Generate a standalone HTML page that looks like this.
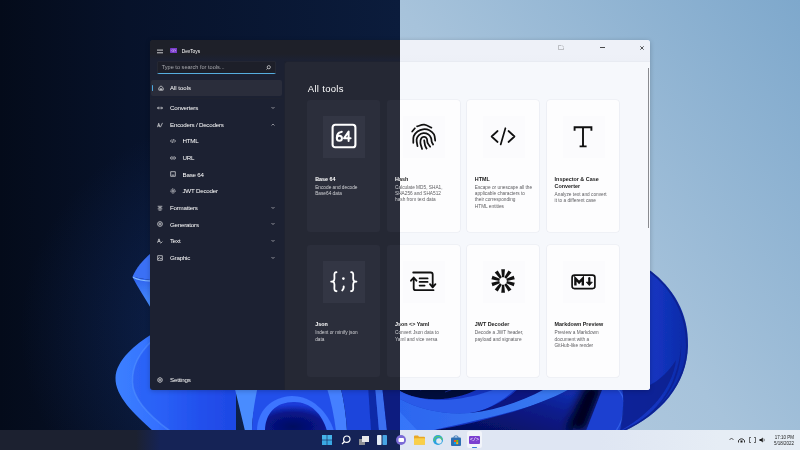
<!DOCTYPE html>
<html><head><meta charset="utf-8"><style>
html,body{margin:0;padding:0;width:800px;height:450px;overflow:hidden;background:#000}
.half{position:absolute;left:0;top:0;width:800px;height:450px;overflow:hidden;will-change:transform;filter:blur(0.3px)}
.win{position:absolute;left:150px;top:40px;width:500px;height:349.5px;border-radius:3px;overflow:hidden;box-shadow:0 1px 5px rgba(0,0,0,0.22)}
svg{display:block}
.t{position:absolute;white-space:nowrap;font-family:"Liberation Sans",sans-serif;line-height:1}
</style></head><body>
<div class="half" style="background:radial-gradient(ellipse 240px 220px at 260px 330px, rgba(25,65,150,0.4), rgba(25,65,150,0) 100%), linear-gradient(90deg,#040b1a 0%,#07122a 16%,#0b1c3c 50%,#0b1c3c 100%);clip-path:inset(0 400px 0 0);">
<svg style="position:absolute;left:0;top:0" width="800" height="450" viewBox="0 0 800 450">
<defs>
<filter id="bldark" x="-5%" y="-5%" width="110%" height="110%"><feGaussianBlur stdDeviation="0.6"/></filter><filter id="softdark" x="-50%" y="-20%" width="200%" height="140%"><feGaussianBlur stdDeviation="4"/></filter>
<linearGradient id="lfdark" x1="0" y1="0" x2="0" y2="1"><stop offset="0" stop-color="#2f63ee"/><stop offset="1" stop-color="#4a92ff"/></linearGradient>
<linearGradient id="lpdark" x1="0" y1="0" x2="1" y2="0"><stop offset="0" stop-color="#3c80ff"/><stop offset="0.35" stop-color="#3470ff"/><stop offset="0.7" stop-color="#1f4ae8"/><stop offset="1" stop-color="#1838d6"/></linearGradient>
<radialGradient id="navydark" cx="0.45" cy="0.85" r="0.75"><stop offset="0" stop-color="#030860"/><stop offset="0.65" stop-color="#08168a"/><stop offset="1" stop-color="#1a3ad8"/></radialGradient>
<linearGradient id="rpdark" x1="0" y1="0" x2="1" y2="0"><stop offset="0" stop-color="#1638c8"/><stop offset="0.6" stop-color="#1233bc"/><stop offset="1" stop-color="#0d2aa6"/></linearGradient>
<linearGradient id="drdark" x1="0" y1="0" x2="1" y2="1"><stop offset="0" stop-color="#1a44d6"/><stop offset="1" stop-color="#0a1c90"/></linearGradient>
<linearGradient id="bbdark" x1="0" y1="0" x2="1" y2="0"><stop offset="0" stop-color="#2c66f0"/><stop offset="1" stop-color="#3a7af0"/></linearGradient>
<linearGradient id="lowdarkdark" x1="0" y1="1" x2="1" y2="0"><stop offset="0" stop-color="#040a50"/><stop offset="0.6" stop-color="#0a1c8c"/><stop offset="1" stop-color="#1838c4"/></linearGradient>
</defs>
<g filter="url(#bldark)">
<!-- upper left petal -->
<path d="M150.5 253.5 C143 260 136 268 132.4 277 L150.5 280 Z" fill="#3a6ff5"/>
<path d="M132.4 277 C138 288 145 298 150.5 307.5 L150.5 280 Z" fill="url(#lfdark)"/>
<path d="M133 277.3 Q140 281 150.5 281" stroke="#86bcff" stroke-width="1.1" fill="none"/>
<!-- big lower-left petal + strip base -->
<path d="M152 334 C136 344 116 360 115.5 378 C115 396 134 414 153 431 L236 431 L236 385 L152 385 Z" fill="url(#lpdark)"/>
<path d="M152 341 C140 352 132 366 132.5 382 C133 400 152 418 170 431 L236 431 L236 385 L152 385 Z" fill="#2456f0" opacity="0.55"/>
<path d="M152 341 C140 352 132 366 132.5 382 C133 400 152 418 170 431" stroke="#5a9cff" stroke-width="1.6" fill="none" opacity="0.45"/>
<!-- light petal slanted at x~235 -->
<path d="M234 385 L262 385 C256 400 252 415 252 431 L245 431 Z" fill="#4a8cff"/>
<path d="M258 385 L340 385 L340 431 L252 431 C252 415 255 400 258 385 Z" fill="#2450ea"/>
<path d="M257 431 C257 412 270 397 292 396 C312 396 328 412 334 431 Z" fill="#3c74ff"/>
<path d="M265 431 C265 413 276 402 294 402 C311 402 322 414 327 431 Z" fill="url(#navydark)"/>
<!-- bands around 330-400 -->
<path d="M326 385 L340 385 C344 400 346 415 347 431 L336 431 C334 415 331 400 326 385 Z" fill="#4580ff"/>
<path d="M340 385 L400 385 L400 431 L347 431 C346 415 344 400 340 385 Z" fill="#1c44dc"/>
<path d="M368 385 L375 385 L379 431 L371 431 Z" fill="#0f2aa8"/>
<path d="M375 385 L382 385 L387 431 L379 431 Z" fill="#3a6ef0"/>
<path d="M382 385 L400 385 L400 431 L387 431 Z" fill="#081a80"/>
<!-- right side strip base -->
<path d="M400 385 L660 385 C650 405 640 420 620 431 L400 431 Z" fill="#1536c4"/>
<!-- top dark wedge -->
<path d="M400 385 L485 385 C470 395 450 400 430 399 C415 398 405 394 400 391 Z" fill="#04093a"/>
<path d="M420 390 L440 386 M445 392 L462 386" stroke="#1a3ab0" stroke-width="1" opacity="0.7"/>
<!-- band 1 -->
<path d="M400 391 C410 397 425 400 440 400 C465 400 490 392 505 385 L520 385 C505 400 485 412 470 413 C445 415 420 410 400 399 Z" fill="#2a5ae8"/>
<!-- dark between -->
<path d="M470 413 C490 410 510 398 522 385 L560 385 C545 400 520 410 480 418 Z" fill="#071280"/>
<!-- band 2 big -->
<path d="M400 399 C420 410 445 415 470 413 C500 410 530 398 552 385 L575 385 C560 396 540 404 510 412 C480 420 450 426 430 431 L400 431 Z" fill="url(#bbdark)"/>
<!-- lower dark region -->
<path d="M430 431 C460 426 495 418 525 408 C548 400 565 392 578 385 L590 385 C585 400 578 415 572 431 Z" fill="url(#lowdarkdark)"/>
<path d="M400 412 L418 431 L400 431 Z" fill="#3d80ff" opacity="0.6"/>
<!-- very dark diagonal -->
<path d="M585 385 L604 385 C598 400 592 415 586 431 L566 431 C572 415 578 400 585 385 Z" fill="#02061e" filter="url(#softdark)"/>
<path d="M604 385 L660 385 C650 405 640 420 620 431 L586 431 C592 415 598 400 604 385 Z" fill="#1a40d0"/>
<path d="M616 388 C622 392 625 400 624 410 C623 418 620 425 616 431" stroke="#3a6af0" stroke-width="1.4" fill="none" opacity="0.7"/>
<!-- right petal -->
<path d="M650 270.5 C672 287 689 312 688 346 C687 385 660 415 624 431 L621 431 C624 415 625 400 621 385 L650 385 Z" fill="url(#rpdark)"/>
<path d="M624 431 C650 418 668 398 676 372 C680 360 681 350 681 340 C684 380 662 414 624 431 Z" fill="#0a1c80" opacity="0.6"/>
<path d="M620 431 C622 418 625 400 622 388 L650 385 C660 380 670 370 676 360 C672 390 650 414 620 431 Z" fill="#0b1d88" opacity="0.75"/>
<path d="M650 271.5 C671.5 288 687.3 313 686.8 346 C686.3 384 659.5 414 623 431" stroke="#0a1f8a" stroke-width="1.6" fill="none" opacity="0.8"/>
</g>
</svg>
<div class="win" style="background:#1c2132;">
<div style="position:absolute;left:0;top:0;width:500px;height:20px;background:linear-gradient(#1e2029 70%,#1c2132)"></div>
<svg style="position:absolute;left:7px;top:8.7px" width="6" height="5" viewBox="0 0 6 5"><path d="M0 1.1H6M0 3.8H6" stroke="#ffffff" stroke-width="0.9" opacity="0.85"/></svg>
<svg style="position:absolute;left:19.8px;top:8px" width="7.4" height="5" viewBox="0 0 7.4 5"><rect width="7.4" height="5" rx="0.8" fill="#7a3ccc"/><path d="M2.6 1.6L1.6 2.5L2.6 3.4M4.8 1.6L5.8 2.5L4.8 3.4M4.1 1.2L3.3 3.8" stroke="#f0e6ff" stroke-width="0.5" fill="none"/></svg>
<div class="t" style="left:31.7px;top:10.2px;font-size:4.8px;color:#ffffff">DevToys</div>
<svg style="position:absolute;left:408px;top:5px" width="6" height="5" viewBox="0 0 6 5"><path d="M0.5 0.5H3.2M0.5 0.5V4.5H5.5V2.5M4 0.3L5.6 2" stroke="#ffffff" fill="none" stroke-width="0.5" opacity="0.45"/></svg>
<div style="position:absolute;left:450px;top:7px;width:4.8px;height:0.6px;background:#ffffff;opacity:0.75"></div>
<svg style="position:absolute;left:489.5px;top:5.6px" width="4" height="4" viewBox="0 0 4 4"><path d="M0.3 0.3L3.7 3.7M3.7 0.3L0.3 3.7" stroke="#ffffff" stroke-width="0.7"/></svg>
<div style="position:absolute;left:7px;top:20.5px;width:118.7px;height:13.8px;background:#1d1f29;border-radius:2px;overflow:hidden;box-shadow:inset 0 0 0 0.6px #2c2f3c"><div class="t" style="left:4.7px;top:4.6px;font-size:5.6px;color:#a8a9ae">Type to search for tools...</div><svg style="position:absolute;left:109px;top:4.5px" width="5" height="5" viewBox="0 0 5 5"><circle cx="2.8" cy="2.2" r="1.6" stroke="#ffffff" fill="none" stroke-width="0.6"/><path d="M1.7 3.3L0.5 4.5" stroke="#ffffff" stroke-width="0.6"/></svg><div style="position:absolute;left:0;bottom:0;width:120px;height:1.4px;background:#56aee0"></div></div>
<div style="position:absolute;left:1px;top:40px;width:131px;height:15.5px;background:#2a2d3b;border-radius:2px"></div>
<div style="position:absolute;left:2px;top:44.7px;width:1.3px;height:6px;background:#4ca7dc;border-radius:1px"></div>
<div style="position:absolute;left:7.5px;top:45px"><svg width="6" height="6" viewBox="0 0 7 7"><g stroke="#ffffff" fill="none" stroke-width="0.8" opacity="0.9"><path d="M1 3.2L3.5 1L6 3.2V6H1Z M2.8 6V4.3H4.2V6"/></g></svg></div>
<div class="t" style="left:20px;top:44.5px;font-size:6px;color:#ffffff">All tools</div>
<div style="position:absolute;left:0;top:58px;width:133px;height:0.6px;background:#1e2230"></div>
<div style="position:absolute;left:7.3px;top:64.8px"><svg width="6" height="6" viewBox="0 0 7 7"><g stroke="#ffffff" fill="none" stroke-width="0.8" opacity="0.9"><path d="M0.6 3.5H6.4 M2 2L0.6 3.5L2 5 M5 2L6.4 3.5L5 5"/></g></svg></div>
<div class="t" style="left:20px;top:64.89999999999999px;font-size:6.2px;letter-spacing:-0.22px;color:#ffffff">Converters</div>
<svg style="position:absolute;left:121px;top:65.8px" width="4" height="4" viewBox="0 0 4 4"><path d="M0.5 1L2 2.5L3.5 1" stroke="#ffffff" fill="none" stroke-width="0.5"/></svg>
<div style="position:absolute;left:7.3px;top:82.0px"><svg width="6" height="6" viewBox="0 0 7 7"><g stroke="#ffffff" fill="none" stroke-width="0.8" opacity="0.9"><path d="M0.6 6L2 1.5L3.4 6 M1.1 4.5H2.9 M4 6L6.4 1"/></g></svg></div>
<div class="t" style="left:20px;top:82.1px;font-size:6.2px;letter-spacing:-0.22px;color:#ffffff">Encoders / Decoders</div>
<svg style="position:absolute;left:121px;top:83.0px" width="4" height="4" viewBox="0 0 4 4"><path d="M0.5 2.5L2 1L3.5 2.5" stroke="#ffffff" fill="none" stroke-width="0.5"/></svg>
<div style="position:absolute;left:20px;top:98.19999999999999px"><svg width="6" height="6" viewBox="0 0 7 7"><g stroke="#ffffff" fill="none" stroke-width="0.8" opacity="0.9"><path d="M2 1.8L0.6 3.5L2 5.2 M5 1.8L6.4 3.5L5 5.2 M4 1.3L3 5.7"/></g></svg></div>
<div class="t" style="left:32.5px;top:98.29999999999998px;font-size:6.2px;letter-spacing:-0.22px;color:#ffffff">HTML</div>
<div style="position:absolute;left:20px;top:114.69999999999999px"><svg width="6" height="6" viewBox="0 0 7 7"><g stroke="#ffffff" fill="none" stroke-width="0.8" opacity="0.9"><path d="M3 2.2H1.8Q0.6 2.2 0.6 3.5Q0.6 4.8 1.8 4.8H3 M4 2.2H5.2Q6.4 2.2 6.4 3.5Q6.4 4.8 5.2 4.8H4 M2.2 3.5H4.8"/></g></svg></div>
<div class="t" style="left:32.5px;top:114.79999999999998px;font-size:6.2px;letter-spacing:-0.22px;color:#ffffff">URL</div>
<div style="position:absolute;left:20px;top:131.4px"><svg width="6" height="6" viewBox="0 0 7 7"><g stroke="#ffffff" fill="none" stroke-width="0.8" opacity="0.9"><path d="M0.8 0.8H6.2V6.2H0.8Z M2 4.8H5"/></g></svg></div>
<div class="t" style="left:32.5px;top:131.5px;font-size:6.2px;letter-spacing:-0.22px;color:#ffffff">Base 64</div>
<div style="position:absolute;left:20px;top:148.0px"><svg width="6" height="6" viewBox="0 0 7 7"><g stroke="#ffffff" fill="none" stroke-width="0.8" opacity="0.9"><circle cx="3.5" cy="3.5" r="1.3"/><circle cx="3.5" cy="3.5" r="2.6" stroke-dasharray="1.2 0.8"/></g></svg></div>
<div class="t" style="left:32.5px;top:148.1px;font-size:6.2px;letter-spacing:-0.22px;color:#ffffff">JWT Decoder</div>
<div style="position:absolute;left:7.3px;top:164.6px"><svg width="6" height="6" viewBox="0 0 7 7"><g stroke="#ffffff" fill="none" stroke-width="0.8" opacity="0.9"><path d="M0.8 1.5H6.2 M1.8 3H5.2 M0.8 4.5H6.2 M1.8 6H5.2"/></g></svg></div>
<div class="t" style="left:20px;top:164.7px;font-size:6.2px;letter-spacing:-0.22px;color:#ffffff">Formatters</div>
<svg style="position:absolute;left:121px;top:165.6px" width="4" height="4" viewBox="0 0 4 4"><path d="M0.5 1L2 2.5L3.5 1" stroke="#ffffff" fill="none" stroke-width="0.5"/></svg>
<div style="position:absolute;left:7.3px;top:181.4px"><svg width="6" height="6" viewBox="0 0 7 7"><g stroke="#ffffff" fill="none" stroke-width="0.8" opacity="0.9"><circle cx="3.5" cy="3.5" r="2.8"/><circle cx="3.5" cy="3.5" r="1.1"/></g></svg></div>
<div class="t" style="left:20px;top:181.5px;font-size:6.2px;letter-spacing:-0.22px;color:#ffffff">Generators</div>
<svg style="position:absolute;left:121px;top:182.4px" width="4" height="4" viewBox="0 0 4 4"><path d="M0.5 1L2 2.5L3.5 1" stroke="#ffffff" fill="none" stroke-width="0.5"/></svg>
<div style="position:absolute;left:7.3px;top:198.0px"><svg width="6" height="6" viewBox="0 0 7 7"><g stroke="#ffffff" fill="none" stroke-width="0.8" opacity="0.9"><path d="M0.6 5.5L2.3 1L4 5.5 M1.2 4H3.4 M4.2 6.3L6.3 4.2"/></g></svg></div>
<div class="t" style="left:20px;top:198.1px;font-size:6.2px;letter-spacing:-0.22px;color:#ffffff">Text</div>
<svg style="position:absolute;left:121px;top:199.0px" width="4" height="4" viewBox="0 0 4 4"><path d="M0.5 1L2 2.5L3.5 1" stroke="#ffffff" fill="none" stroke-width="0.5"/></svg>
<div style="position:absolute;left:7.3px;top:214.8px"><svg width="6" height="6" viewBox="0 0 7 7"><g stroke="#ffffff" fill="none" stroke-width="0.8" opacity="0.9"><path d="M0.8 0.8H6.2V6.2H0.8Z M0.8 5L2.8 3L4.5 4.7L5.3 4L6.2 4.9"/></g></svg></div>
<div class="t" style="left:20px;top:214.9px;font-size:6.2px;letter-spacing:-0.22px;color:#ffffff">Graphic</div>
<svg style="position:absolute;left:121px;top:215.8px" width="4" height="4" viewBox="0 0 4 4"><path d="M0.5 1L2 2.5L3.5 1" stroke="#ffffff" fill="none" stroke-width="0.5"/></svg>
<div style="position:absolute;left:7px;top:337.3px"><svg width="6" height="6" viewBox="0 0 7 7"><g stroke="#ffffff" fill="none" stroke-width="0.8" opacity="0.9"><circle cx="3.5" cy="3.5" r="1.2"/><path d="M3.5 0.6L6 2V5L3.5 6.4L1 5V2Z"/></g></svg></div>
<div class="t" style="left:20px;top:337.1px;font-size:6.2px;letter-spacing:-0.22px;color:#ffffff">Settings</div>
<div style="position:absolute;left:133.5px;top:20.5px;width:366.5px;height:329.5px;background:#252834;border-top-left-radius:3px;border-left:0.6px solid #1e2230;border-top:0.6px solid #1e2230">
<div class="t" style="left:23.3px;top:22.5px;font-size:9.5px;letter-spacing:0.3px;color:#ffffff">All tools</div>
<div style="position:absolute;left:363.5px;top:6px;width:0.8px;height:160px;background:#6d6e74"></div>
<div style="position:absolute;left:22.69999999999999px;top:38.4px;width:72.5px;height:132px;background:#2b2e3b;border-radius:3px;box-shadow:0 0 0 0.6px transparent">
<div style="position:absolute;left:16px;top:16px;width:42px;height:42px;background:#333644;border-radius:0;display:flex;align-items:center;justify-content:center"><svg width="26" height="26" viewBox="0 0 26 26" style="overflow:visible"><rect x="1.6" y="0.8" width="22.8" height="22.5" rx="2.6" stroke="#ffffff" fill="none" stroke-width="2.1" stroke-linecap="round" stroke-linejoin="round"/><circle cx="8.4" cy="14.3" r="2.55" stroke="#ffffff" fill="none" stroke-width="2" stroke-linecap="round" stroke-linejoin="round"/><path d="M10.80 7.80 C10.37 7.93 8.97 8.03 8.20 8.60 C7.43 9.17 6.58 10.27 6.20 11.20 C5.82 12.13 5.95 13.70 5.90 14.20" stroke="#ffffff" fill="none" stroke-width="2" stroke-linecap="round" stroke-linejoin="round"/><path d="M17.6 17.1V7.6L13 14.2H19.6" stroke="#ffffff" fill="none" stroke-width="2" stroke-linecap="round" stroke-linejoin="round"/></svg></div>
<div class="t" style="left:8px;top:76.7px;font-size:5.4px;font-weight:bold;color:#ffffff">Base 64</div>
<div class="t" style="left:8px;top:86.0px;font-size:4.75px;color:#cfd0d4">Encode and decode</div>
<div class="t" style="left:8px;top:92.25px;font-size:4.75px;color:#cfd0d4">Base64 data</div>
</div>
<div style="position:absolute;left:102.5px;top:38.4px;width:72.5px;height:132px;background:#2b2e3b;border-radius:3px;box-shadow:0 0 0 0.6px transparent">
<div style="position:absolute;left:16px;top:16px;width:42px;height:42px;background:#333644;border-radius:0;display:flex;align-items:center;justify-content:center"><svg width="26" height="26" viewBox="0 0 26 26" style="overflow:visible"><path d="M6.10 2.40 C7.28 2.12 10.82 0.50 13.20 0.70 C15.58 0.90 19.20 3.12 20.40 3.60" stroke="#ffffff" fill="none" stroke-width="1.75" stroke-linecap="round" stroke-linejoin="round"/><path d="M1.20 7.50 L3.90 4.30" stroke="#ffffff" fill="none" stroke-width="1.75" stroke-linecap="round" stroke-linejoin="round"/><path d="M2.30 18.90 C2.37 17.77 2.00 14.00 2.70 12.10 C3.40 10.20 4.95 8.63 6.50 7.50 C8.05 6.37 10.03 5.52 12.00 5.30 C13.97 5.08 16.47 5.35 18.30 6.20 C20.13 7.05 22.02 8.65 23.00 10.40 C23.98 12.15 24.00 15.65 24.20 16.70" stroke="#ffffff" fill="none" stroke-width="1.75" stroke-linecap="round" stroke-linejoin="round"/><path d="M6.50 22.20 C6.35 21.08 5.40 17.32 5.60 15.50 C5.80 13.68 6.57 12.37 7.70 11.30 C8.83 10.23 10.77 9.25 12.40 9.10 C14.03 8.95 16.23 9.62 17.50 10.40 C18.77 11.18 19.45 12.53 20.00 13.80 C20.55 15.07 20.45 16.88 20.80 18.00 C21.15 19.12 21.88 20.08 22.10 20.50" stroke="#ffffff" fill="none" stroke-width="1.75" stroke-linecap="round" stroke-linejoin="round"/><path d="M11.10 24.90 C10.82 23.90 9.53 20.68 9.40 18.90 C9.27 17.12 9.67 15.20 10.30 14.20 C10.93 13.20 12.28 12.83 13.20 12.90 C14.12 12.97 15.23 13.60 15.80 14.60 C16.37 15.60 16.03 17.55 16.60 18.90 C17.17 20.25 18.77 22.07 19.20 22.70" stroke="#ffffff" fill="none" stroke-width="1.75" stroke-linecap="round" stroke-linejoin="round"/><path d="M13.20 16.30 C13.35 17.15 13.70 20.03 14.10 21.40 C14.50 22.77 15.35 23.98 15.60 24.50" stroke="#ffffff" fill="none" stroke-width="1.75" stroke-linecap="round" stroke-linejoin="round"/></svg></div>
<div class="t" style="left:8px;top:76.7px;font-size:5.4px;font-weight:bold;color:#ffffff">Hash</div>
<div class="t" style="left:8px;top:86.0px;font-size:4.75px;color:#cfd0d4">Calculate MD5, SHA1,</div>
<div class="t" style="left:8px;top:92.25px;font-size:4.75px;color:#cfd0d4">SHA256 and SHA512</div>
<div class="t" style="left:8px;top:98.5px;font-size:4.75px;color:#cfd0d4">hash from text data</div>
</div>
<div style="position:absolute;left:182.29999999999995px;top:38.4px;width:72.5px;height:132px;background:#2b2e3b;border-radius:3px;box-shadow:0 0 0 0.6px transparent">
<div style="position:absolute;left:16px;top:16px;width:42px;height:42px;background:#333644;border-radius:0;display:flex;align-items:center;justify-content:center"><svg width="26" height="26" viewBox="0 0 26 26" style="overflow:visible"><path d="M6.6 7L0.6 12.5L6.6 18M17.5 7L23.5 12.5L17.5 18M14.4 4.2L9.7 20.4" stroke="#ffffff" fill="none" stroke-width="1.7" stroke-linecap="round" stroke-linejoin="round"/></svg></div>
<div class="t" style="left:8px;top:76.7px;font-size:5.4px;font-weight:bold;color:#ffffff">HTML</div>
<div class="t" style="left:8px;top:86.0px;font-size:4.75px;color:#cfd0d4">Escape or unescape all the</div>
<div class="t" style="left:8px;top:92.25px;font-size:4.75px;color:#cfd0d4">applicable characters to</div>
<div class="t" style="left:8px;top:98.5px;font-size:4.75px;color:#cfd0d4">their corresponding</div>
<div class="t" style="left:8px;top:104.75px;font-size:4.75px;color:#cfd0d4">HTML entities</div>
</div>
<div style="position:absolute;left:262.1px;top:38.4px;width:72.5px;height:132px;background:#2b2e3b;border-radius:3px;box-shadow:0 0 0 0.6px transparent">
<div style="position:absolute;left:16px;top:16px;width:42px;height:42px;background:#333644;border-radius:0;display:flex;align-items:center;justify-content:center"><svg width="26" height="26" viewBox="0 0 26 26" style="overflow:visible"><path d="M3.6 6.8V3.3H20.4V6.8M12 3.3V22.4M8.6 22.4H15.6" stroke="#ffffff" fill="none" stroke-width="1.9"/></svg></div>
<div class="t" style="left:8px;top:76.7px;font-size:5.4px;font-weight:bold;color:#ffffff">Inspector &amp; Case</div>
<div class="t" style="left:8px;top:83.9px;font-size:5.4px;font-weight:bold;color:#ffffff">Converter</div>
<div class="t" style="left:8px;top:93.2px;font-size:4.75px;color:#cfd0d4">Analyze text and convert</div>
<div class="t" style="left:8px;top:99.45px;font-size:4.75px;color:#cfd0d4">it to a different case</div>
</div>
<div style="position:absolute;left:22.69999999999999px;top:183.9px;width:72.5px;height:132px;background:#2b2e3b;border-radius:3px;box-shadow:0 0 0 0.6px transparent">
<div style="position:absolute;left:16px;top:16px;width:42px;height:42px;background:#333644;border-radius:0;display:flex;align-items:center;justify-content:center"><svg width="26" height="26" viewBox="0 0 26 26" style="overflow:visible"><g transform="translate(0 0.8)"><path d="M5.50 2.40 C5.25 2.47 4.35 2.43 4.00 2.80 C3.65 3.17 3.50 3.57 3.40 4.60 C3.30 5.63 3.53 7.90 3.40 9.00 C3.27 10.10 3.13 10.73 2.60 11.20 C2.07 11.67 0.60 11.70 0.20 11.80 M0.20 11.80 C0.60 11.90 2.07 11.93 2.60 12.40 C3.13 12.87 3.27 13.50 3.40 14.60 C3.53 15.70 3.30 17.97 3.40 19.00 C3.50 20.03 3.65 20.40 4.00 20.80 C4.35 21.20 5.25 21.30 5.50 21.40" stroke="#ffffff" fill="none" stroke-width="1.8" stroke-linecap="round" stroke-linejoin="round"/><path transform="translate(0.9 0)" d="M19.20 2.40 C19.45 2.47 20.35 2.43 20.70 2.80 C21.05 3.17 21.20 3.57 21.30 4.60 C21.40 5.63 21.17 7.90 21.30 9.00 C21.43 10.10 21.57 10.73 22.10 11.20 C22.63 11.67 24.10 11.70 24.50 11.80 M24.50 11.80 C24.10 11.90 22.63 11.93 22.10 12.40 C21.57 12.87 21.43 13.50 21.30 14.60 C21.17 15.70 21.40 17.97 21.30 19.00 C21.20 20.03 21.05 20.40 20.70 20.80 C20.35 21.20 19.45 21.30 19.20 21.40" stroke="#ffffff" fill="none" stroke-width="1.8" stroke-linecap="round" stroke-linejoin="round"/><circle cx="12.4" cy="8.8" r="1.3" fill="#ffffff"/><path d="M12.7 16.6 Q12.9 19 11.3 20.6" stroke="#ffffff" fill="none" stroke-width="1.9" stroke-linecap="round" stroke-linejoin="round"/></g></svg></div>
<div class="t" style="left:8px;top:76.7px;font-size:5.4px;font-weight:bold;color:#ffffff">Json</div>
<div class="t" style="left:8px;top:86.0px;font-size:4.75px;color:#cfd0d4">Indent or minify json</div>
<div class="t" style="left:8px;top:92.25px;font-size:4.75px;color:#cfd0d4">data</div>
</div>
<div style="position:absolute;left:102.5px;top:183.9px;width:72.5px;height:132px;background:#2b2e3b;border-radius:3px;box-shadow:0 0 0 0.6px transparent">
<div style="position:absolute;left:16px;top:16px;width:42px;height:42px;background:#333644;border-radius:0;display:flex;align-items:center;justify-content:center"><svg width="26" height="26" viewBox="0 0 26 26" style="overflow:visible"><path transform="translate(0 1.2)" d="M2.2 2.3H19.7Q21.7 2.3 21.7 4.3V16.6M19 13.9L21.7 17.1L24.4 13.9M2.7 7.6V18Q2.7 20 4.7 20H22.5M0 10.5L2.7 7.3L5.4 10.5M8.6 8.2H16.6M8.6 11.7H16.6M8.6 15.4H13.6" stroke="#ffffff" fill="none" stroke-width="1.8" stroke-linecap="round" stroke-linejoin="round"/></svg></div>
<div class="t" style="left:8px;top:76.7px;font-size:5.4px;font-weight:bold;color:#ffffff">Json &lt;&gt; Yaml</div>
<div class="t" style="left:8px;top:86.0px;font-size:4.75px;color:#cfd0d4">Convert Json data to</div>
<div class="t" style="left:8px;top:92.25px;font-size:4.75px;color:#cfd0d4">Yaml and vice versa</div>
</div>
<div style="position:absolute;left:182.29999999999995px;top:183.9px;width:72.5px;height:132px;background:#2b2e3b;border-radius:3px;box-shadow:0 0 0 0.6px transparent">
<div style="position:absolute;left:16px;top:16px;width:42px;height:42px;background:#333644;border-radius:0;display:flex;align-items:center;justify-content:center"><svg width="26" height="26" viewBox="0 0 26 26" style="overflow:visible"><path d="M13.20 8.30 L13.95 0.30 L10.25 0.30 L11.00 8.30Z" fill="#ffffff"/><path d="M15.16 9.65 L20.47 3.62 L17.48 1.45 L13.38 8.36Z" fill="#ffffff"/><path d="M15.96 11.90 L23.80 10.14 L22.66 6.63 L15.28 9.81Z" fill="#ffffff"/><path d="M15.28 14.19 L22.66 17.37 L23.80 13.86 L15.96 12.10Z" fill="#ffffff"/><path d="M13.38 15.64 L17.48 22.55 L20.47 20.38 L15.16 14.35Z" fill="#ffffff"/><path d="M11.00 15.70 L10.25 23.70 L13.95 23.70 L13.20 15.70Z" fill="#ffffff"/><path d="M9.04 14.35 L3.73 20.38 L6.72 22.55 L10.82 15.64Z" fill="#ffffff"/><path d="M8.24 12.10 L0.40 13.86 L1.54 17.37 L8.92 14.19Z" fill="#ffffff"/><path d="M8.92 9.81 L1.54 6.63 L0.40 10.14 L8.24 11.90Z" fill="#ffffff"/><path d="M10.82 8.36 L6.72 1.45 L3.73 3.62 L9.04 9.65Z" fill="#ffffff"/></svg></div>
<div class="t" style="left:8px;top:76.7px;font-size:5.4px;font-weight:bold;color:#ffffff">JWT Decoder</div>
<div class="t" style="left:8px;top:86.0px;font-size:4.75px;color:#cfd0d4">Decode a JWT header,</div>
<div class="t" style="left:8px;top:92.25px;font-size:4.75px;color:#cfd0d4">payload and signature</div>
</div>
<div style="position:absolute;left:262.1px;top:183.9px;width:72.5px;height:132px;background:#2b2e3b;border-radius:3px;box-shadow:0 0 0 0.6px transparent">
<div style="position:absolute;left:16px;top:16px;width:42px;height:42px;background:#333644;border-radius:0;display:flex;align-items:center;justify-content:center"><svg width="26" height="26" viewBox="0 0 26 26" style="overflow:visible"><rect x="1.1" y="6.1" width="22.8" height="13.5" rx="2.4" stroke="#ffffff" fill="none" stroke-width="1.7" stroke-linecap="round" stroke-linejoin="round"/><path d="M4.4 16.4V9.5L8.1 13.4L11.8 9.5V16.4" stroke="#ffffff" fill="none" stroke-width="2.4" stroke-linejoin="miter"/><path d="M18.3 9.2V14.5" stroke="#ffffff" fill="none" stroke-width="2.2" stroke-linecap="round" stroke-linejoin="round"/><path d="M15.3 13.2H21.3L18.3 16.6Z" fill="#ffffff" stroke="#ffffff" stroke-width="0.8" stroke-linejoin="round"/></svg></div>
<div class="t" style="left:8px;top:76.7px;font-size:5.4px;font-weight:bold;color:#ffffff">Markdown Preview</div>
<div class="t" style="left:8px;top:86.0px;font-size:4.75px;color:#cfd0d4">Preview a Markdown</div>
<div class="t" style="left:8px;top:92.25px;font-size:4.75px;color:#cfd0d4">document with a</div>
<div class="t" style="left:8px;top:98.5px;font-size:4.75px;color:#cfd0d4">GitHub-like render</div>
</div>
</div>
</div>
<div style="position:absolute;left:0;top:429.5px;width:800px;height:20.5px;background:linear-gradient(90deg,#1c2130 0%,#1c2130 17%,#152356 20%,#152356 50%)">
<svg style="position:absolute;left:321.5px;top:5.5px" width="10" height="10" viewBox="0 0 10 10"><rect x="0" y="0" width="4.7" height="4.7" fill="#46b4ea"/><rect x="5.3" y="0" width="4.7" height="4.7" fill="#46b4ea"/><rect x="0" y="5.3" width="4.7" height="4.7" fill="#3aa8e4"/><rect x="5.3" y="5.3" width="4.7" height="4.7" fill="#3aa8e4"/></svg>
<svg style="position:absolute;left:340.5px;top:5.5px" width="10" height="10" viewBox="0 0 10 10"><circle cx="5.8" cy="4.2" r="3.2" stroke="#ffffff" fill="none" stroke-width="1.2"/><path d="M3.5 6.5L1 9" stroke="#ffffff" stroke-width="1.3"/></svg>
<svg style="position:absolute;left:359px;top:6px" width="10" height="9" viewBox="0 0 10 9"><rect x="0" y="3" width="6" height="6" fill="#8d8f94"/><rect x="3" y="0" width="7" height="6" fill="#e8e8ea"/></svg>
<svg style="position:absolute;left:377px;top:5.5px" width="10" height="10" viewBox="0 0 10 10"><rect x="0" y="0" width="4.5" height="10" rx="0.8" fill="#e6eef6"/><rect x="5.5" y="0" width="4.5" height="10" rx="0.8" fill="#47a5e4"/></svg>
<svg style="position:absolute;left:395.5px;top:5.5px" width="10" height="10" viewBox="0 0 10 10"><circle cx="5" cy="5" r="5" fill="#7b6bd6"/><rect x="2.5" y="3" width="5.5" height="4" rx="1" fill="#fff"/></svg>
<svg style="position:absolute;left:414px;top:5.5px" width="11" height="10" viewBox="0 0 11 10"><path d="M0 1.5Q0 0.5 1 0.5H4L5 1.8H10Q11 1.8 11 2.8V9.5H0Z" fill="#e8a726"/><rect x="0" y="3.2" width="11" height="6.6" rx="0.8" fill="#f9cf4a"/></svg>
<svg style="position:absolute;left:432.5px;top:5.5px" width="10" height="10" viewBox="0 0 10 10"><circle cx="5" cy="5" r="5" fill="#2aa0e0"/><circle cx="6" cy="6" r="2.8" fill="#e2e9f1"/><path d="M1 6 Q2 1 6 1.5 Q9 2.5 9 5" fill="none" stroke="#58c86a" stroke-width="1.2"/></svg>
<svg style="position:absolute;left:450.5px;top:5px" width="10" height="11" viewBox="0 0 10 11"><rect x="0" y="2.5" width="10" height="8.5" rx="1" fill="#2d6fb3"/><path d="M3 3V1.5Q5 0 7 1.5V3" stroke="#2d6fb3" fill="none" stroke-width="0.8"/><rect x="3" y="5" width="2" height="2" fill="#f35325"/><rect x="5.2" y="5" width="2" height="2" fill="#81bc06"/><rect x="3" y="7.2" width="2" height="2" fill="#05a6f0"/><rect x="5.2" y="7.2" width="2" height="2" fill="#ffba08"/></svg>
<div style="position:absolute;left:466.5px;top:1.5px;width:15.5px;height:17px;background:rgba(255,255,255,0.55);border-radius:2px"></div>
<div style="position:absolute;left:469px;top:6px;width:11px;height:8px;background:#7b3fd0;border-radius:1px;color:#fff;font-size:5px;line-height:8px;text-align:center;font-family:Liberation Mono">&lt;/&gt;</div>
<div style="position:absolute;left:471.5px;top:17.2px;width:5px;height:1.2px;background:#3a7bd5;border-radius:1px"></div>
<svg style="position:absolute;left:729px;top:7px" width="5" height="4" viewBox="0 0 5 4"><path d="M0.5 3L2.5 1L4.5 3" stroke="#ffffff" fill="none" stroke-width="0.7"/></svg>
<svg style="position:absolute;left:738px;top:7px" width="7" height="6" viewBox="0 0 7 6"><path d="M0.5 5.5V3.5Q3.5 0 6.5 3.5V5.5" stroke="#ffffff" fill="none" stroke-width="0.9"/><rect x="2.5" y="3.5" width="2" height="2" fill="#ffffff"/></svg>
<svg style="position:absolute;left:749px;top:7px" width="7" height="6" viewBox="0 0 7 6"><path d="M2 0.4H0.4V5.6H2M5 0.4H6.6V5.6H5" stroke="#ffffff" fill="none" stroke-width="0.7"/></svg>
<svg style="position:absolute;left:759px;top:7.5px" width="7" height="6" viewBox="0 0 7 6"><path d="M0.5 2H2L3.8 0.5V5.5L2 4H0.5Z" fill="#ffffff"/><path d="M4.8 1.6Q5.8 3 4.8 4.4" stroke="#ffffff" fill="none" stroke-width="0.6"/></svg>
<div class="t" style="left:773px;top:6px;font-size:4.5px;color:#ffffff;text-align:right;width:21px">17:10 PM</div>
<div class="t" style="left:771px;top:12.8px;font-size:4.5px;color:#ffffff;text-align:right;width:23px">5/18/2022</div>
</div>
</div>
<div class="half" style="background:linear-gradient(232deg,#7ea8cc 0%,#a7c3db 35%,#cfdce8 100%);clip-path:inset(0 0 0 400px);">
<svg style="position:absolute;left:0;top:0" width="800" height="450" viewBox="0 0 800 450">
<defs>
<filter id="bllight" x="-5%" y="-5%" width="110%" height="110%"><feGaussianBlur stdDeviation="0.6"/></filter><filter id="softlight" x="-50%" y="-20%" width="200%" height="140%"><feGaussianBlur stdDeviation="4"/></filter>
<linearGradient id="lflight" x1="0" y1="0" x2="0" y2="1"><stop offset="0" stop-color="#2f63ee"/><stop offset="1" stop-color="#4a92ff"/></linearGradient>
<linearGradient id="lplight" x1="0" y1="0" x2="1" y2="0"><stop offset="0" stop-color="#3c80ff"/><stop offset="0.35" stop-color="#3470ff"/><stop offset="0.7" stop-color="#1f4ae8"/><stop offset="1" stop-color="#1838d6"/></linearGradient>
<radialGradient id="navylight" cx="0.45" cy="0.85" r="0.75"><stop offset="0" stop-color="#030860"/><stop offset="0.65" stop-color="#08168a"/><stop offset="1" stop-color="#1a3ad8"/></radialGradient>
<linearGradient id="rplight" x1="0" y1="0" x2="1" y2="0"><stop offset="0" stop-color="#1638c8"/><stop offset="0.6" stop-color="#1233bc"/><stop offset="1" stop-color="#0d2aa6"/></linearGradient>
<linearGradient id="drlight" x1="0" y1="0" x2="1" y2="1"><stop offset="0" stop-color="#1a44d6"/><stop offset="1" stop-color="#0a1c90"/></linearGradient>
<linearGradient id="bblight" x1="0" y1="0" x2="1" y2="0"><stop offset="0" stop-color="#2c66f0"/><stop offset="1" stop-color="#3a7af0"/></linearGradient>
<linearGradient id="lowdarklight" x1="0" y1="1" x2="1" y2="0"><stop offset="0" stop-color="#040a50"/><stop offset="0.6" stop-color="#0a1c8c"/><stop offset="1" stop-color="#1838c4"/></linearGradient>
</defs>
<g filter="url(#bllight)">
<!-- upper left petal -->
<path d="M150.5 253.5 C143 260 136 268 132.4 277 L150.5 280 Z" fill="#3a6ff5"/>
<path d="M132.4 277 C138 288 145 298 150.5 307.5 L150.5 280 Z" fill="url(#lflight)"/>
<path d="M133 277.3 Q140 281 150.5 281" stroke="#86bcff" stroke-width="1.1" fill="none"/>
<!-- big lower-left petal + strip base -->
<path d="M152 334 C136 344 116 360 115.5 378 C115 396 134 414 153 431 L236 431 L236 385 L152 385 Z" fill="url(#lplight)"/>
<path d="M152 341 C140 352 132 366 132.5 382 C133 400 152 418 170 431 L236 431 L236 385 L152 385 Z" fill="#2456f0" opacity="0.55"/>
<path d="M152 341 C140 352 132 366 132.5 382 C133 400 152 418 170 431" stroke="#5a9cff" stroke-width="1.6" fill="none" opacity="0.45"/>
<!-- light petal slanted at x~235 -->
<path d="M234 385 L262 385 C256 400 252 415 252 431 L245 431 Z" fill="#4a8cff"/>
<path d="M258 385 L340 385 L340 431 L252 431 C252 415 255 400 258 385 Z" fill="#2450ea"/>
<path d="M257 431 C257 412 270 397 292 396 C312 396 328 412 334 431 Z" fill="#3c74ff"/>
<path d="M265 431 C265 413 276 402 294 402 C311 402 322 414 327 431 Z" fill="url(#navylight)"/>
<!-- bands around 330-400 -->
<path d="M326 385 L340 385 C344 400 346 415 347 431 L336 431 C334 415 331 400 326 385 Z" fill="#4580ff"/>
<path d="M340 385 L400 385 L400 431 L347 431 C346 415 344 400 340 385 Z" fill="#1c44dc"/>
<path d="M368 385 L375 385 L379 431 L371 431 Z" fill="#0f2aa8"/>
<path d="M375 385 L382 385 L387 431 L379 431 Z" fill="#3a6ef0"/>
<path d="M382 385 L400 385 L400 431 L387 431 Z" fill="#081a80"/>
<!-- right side strip base -->
<path d="M400 385 L660 385 C650 405 640 420 620 431 L400 431 Z" fill="#1536c4"/>
<!-- top dark wedge -->
<path d="M400 385 L485 385 C470 395 450 400 430 399 C415 398 405 394 400 391 Z" fill="#04093a"/>
<path d="M420 390 L440 386 M445 392 L462 386" stroke="#1a3ab0" stroke-width="1" opacity="0.7"/>
<!-- band 1 -->
<path d="M400 391 C410 397 425 400 440 400 C465 400 490 392 505 385 L520 385 C505 400 485 412 470 413 C445 415 420 410 400 399 Z" fill="#2a5ae8"/>
<!-- dark between -->
<path d="M470 413 C490 410 510 398 522 385 L560 385 C545 400 520 410 480 418 Z" fill="#071280"/>
<!-- band 2 big -->
<path d="M400 399 C420 410 445 415 470 413 C500 410 530 398 552 385 L575 385 C560 396 540 404 510 412 C480 420 450 426 430 431 L400 431 Z" fill="url(#bblight)"/>
<!-- lower dark region -->
<path d="M430 431 C460 426 495 418 525 408 C548 400 565 392 578 385 L590 385 C585 400 578 415 572 431 Z" fill="url(#lowdarklight)"/>
<path d="M400 412 L418 431 L400 431 Z" fill="#3d80ff" opacity="0.6"/>
<!-- very dark diagonal -->
<path d="M585 385 L604 385 C598 400 592 415 586 431 L566 431 C572 415 578 400 585 385 Z" fill="#02061e" filter="url(#softlight)"/>
<path d="M604 385 L660 385 C650 405 640 420 620 431 L586 431 C592 415 598 400 604 385 Z" fill="#1a40d0"/>
<path d="M616 388 C622 392 625 400 624 410 C623 418 620 425 616 431" stroke="#3a6af0" stroke-width="1.4" fill="none" opacity="0.7"/>
<!-- right petal -->
<path d="M650 270.5 C672 287 689 312 688 346 C687 385 660 415 624 431 L621 431 C624 415 625 400 621 385 L650 385 Z" fill="url(#rplight)"/>
<path d="M624 431 C650 418 668 398 676 372 C680 360 681 350 681 340 C684 380 662 414 624 431 Z" fill="#0a1c80" opacity="0.6"/>
<path d="M620 431 C622 418 625 400 622 388 L650 385 C660 380 670 370 676 360 C672 390 650 414 620 431 Z" fill="#0b1d88" opacity="0.75"/>
<path d="M650 271.5 C671.5 288 687.3 313 686.8 346 C686.3 384 659.5 414 623 431" stroke="#0a1f8a" stroke-width="1.6" fill="none" opacity="0.8"/>
</g>
</svg>
<div class="win" style="background:#edf0f7;">
<div style="position:absolute;left:0;top:0;width:500px;height:20px;background:linear-gradient(#eef1f8 70%,#edf0f7)"></div>
<svg style="position:absolute;left:7px;top:8.7px" width="6" height="5" viewBox="0 0 6 5"><path d="M0 1.1H6M0 3.8H6" stroke="#111111" stroke-width="0.9" opacity="0.85"/></svg>
<svg style="position:absolute;left:19.8px;top:8px" width="7.4" height="5" viewBox="0 0 7.4 5"><rect width="7.4" height="5" rx="0.8" fill="#7a3ccc"/><path d="M2.6 1.6L1.6 2.5L2.6 3.4M4.8 1.6L5.8 2.5L4.8 3.4M4.1 1.2L3.3 3.8" stroke="#f0e6ff" stroke-width="0.5" fill="none"/></svg>
<div class="t" style="left:31.7px;top:10.2px;font-size:4.8px;color:#1b1b1b">DevToys</div>
<svg style="position:absolute;left:408px;top:5px" width="6" height="5" viewBox="0 0 6 5"><path d="M0.5 0.5H3.2M0.5 0.5V4.5H5.5V2.5M4 0.3L5.6 2" stroke="#111111" fill="none" stroke-width="0.5" opacity="0.45"/></svg>
<div style="position:absolute;left:450px;top:7px;width:4.8px;height:0.6px;background:#111111;opacity:0.75"></div>
<svg style="position:absolute;left:489.5px;top:5.6px" width="4" height="4" viewBox="0 0 4 4"><path d="M0.3 0.3L3.7 3.7M3.7 0.3L0.3 3.7" stroke="#111111" stroke-width="0.7"/></svg>
<div style="position:absolute;left:7px;top:20.5px;width:118.7px;height:13.8px;background:#fafbfd;border-radius:2px;overflow:hidden;box-shadow:inset 0 0 0 0.6px #dfe2ea"><div class="t" style="left:4.7px;top:4.6px;font-size:5.6px;color:#6b6b70">Type to search for tools...</div><svg style="position:absolute;left:109px;top:4.5px" width="5" height="5" viewBox="0 0 5 5"><circle cx="2.8" cy="2.2" r="1.6" stroke="#111111" fill="none" stroke-width="0.6"/><path d="M1.7 3.3L0.5 4.5" stroke="#111111" stroke-width="0.6"/></svg><div style="position:absolute;left:0;bottom:0;width:120px;height:1.4px;background:#56aee0"></div></div>
<div style="position:absolute;left:1px;top:40px;width:131px;height:15.5px;background:#e3e6ee;border-radius:2px"></div>
<div style="position:absolute;left:2px;top:44.7px;width:1.3px;height:6px;background:#4ca7dc;border-radius:1px"></div>
<div style="position:absolute;left:7.5px;top:45px"><svg width="6" height="6" viewBox="0 0 7 7"><g stroke="#111111" fill="none" stroke-width="0.8" opacity="0.9"><path d="M1 3.2L3.5 1L6 3.2V6H1Z M2.8 6V4.3H4.2V6"/></g></svg></div>
<div class="t" style="left:20px;top:44.5px;font-size:6px;color:#1b1b1b">All tools</div>
<div style="position:absolute;left:0;top:58px;width:133px;height:0.6px;background:#e8ebf2"></div>
<div style="position:absolute;left:7.3px;top:64.8px"><svg width="6" height="6" viewBox="0 0 7 7"><g stroke="#111111" fill="none" stroke-width="0.8" opacity="0.9"><path d="M0.6 3.5H6.4 M2 2L0.6 3.5L2 5 M5 2L6.4 3.5L5 5"/></g></svg></div>
<div class="t" style="left:20px;top:64.89999999999999px;font-size:6.2px;letter-spacing:-0.22px;color:#1b1b1b">Converters</div>
<svg style="position:absolute;left:121px;top:65.8px" width="4" height="4" viewBox="0 0 4 4"><path d="M0.5 1L2 2.5L3.5 1" stroke="#111111" fill="none" stroke-width="0.5"/></svg>
<div style="position:absolute;left:7.3px;top:82.0px"><svg width="6" height="6" viewBox="0 0 7 7"><g stroke="#111111" fill="none" stroke-width="0.8" opacity="0.9"><path d="M0.6 6L2 1.5L3.4 6 M1.1 4.5H2.9 M4 6L6.4 1"/></g></svg></div>
<div class="t" style="left:20px;top:82.1px;font-size:6.2px;letter-spacing:-0.22px;color:#1b1b1b">Encoders / Decoders</div>
<svg style="position:absolute;left:121px;top:83.0px" width="4" height="4" viewBox="0 0 4 4"><path d="M0.5 2.5L2 1L3.5 2.5" stroke="#111111" fill="none" stroke-width="0.5"/></svg>
<div style="position:absolute;left:20px;top:98.19999999999999px"><svg width="6" height="6" viewBox="0 0 7 7"><g stroke="#111111" fill="none" stroke-width="0.8" opacity="0.9"><path d="M2 1.8L0.6 3.5L2 5.2 M5 1.8L6.4 3.5L5 5.2 M4 1.3L3 5.7"/></g></svg></div>
<div class="t" style="left:32.5px;top:98.29999999999998px;font-size:6.2px;letter-spacing:-0.22px;color:#1b1b1b">HTML</div>
<div style="position:absolute;left:20px;top:114.69999999999999px"><svg width="6" height="6" viewBox="0 0 7 7"><g stroke="#111111" fill="none" stroke-width="0.8" opacity="0.9"><path d="M3 2.2H1.8Q0.6 2.2 0.6 3.5Q0.6 4.8 1.8 4.8H3 M4 2.2H5.2Q6.4 2.2 6.4 3.5Q6.4 4.8 5.2 4.8H4 M2.2 3.5H4.8"/></g></svg></div>
<div class="t" style="left:32.5px;top:114.79999999999998px;font-size:6.2px;letter-spacing:-0.22px;color:#1b1b1b">URL</div>
<div style="position:absolute;left:20px;top:131.4px"><svg width="6" height="6" viewBox="0 0 7 7"><g stroke="#111111" fill="none" stroke-width="0.8" opacity="0.9"><path d="M0.8 0.8H6.2V6.2H0.8Z M2 4.8H5"/></g></svg></div>
<div class="t" style="left:32.5px;top:131.5px;font-size:6.2px;letter-spacing:-0.22px;color:#1b1b1b">Base 64</div>
<div style="position:absolute;left:20px;top:148.0px"><svg width="6" height="6" viewBox="0 0 7 7"><g stroke="#111111" fill="none" stroke-width="0.8" opacity="0.9"><circle cx="3.5" cy="3.5" r="1.3"/><circle cx="3.5" cy="3.5" r="2.6" stroke-dasharray="1.2 0.8"/></g></svg></div>
<div class="t" style="left:32.5px;top:148.1px;font-size:6.2px;letter-spacing:-0.22px;color:#1b1b1b">JWT Decoder</div>
<div style="position:absolute;left:7.3px;top:164.6px"><svg width="6" height="6" viewBox="0 0 7 7"><g stroke="#111111" fill="none" stroke-width="0.8" opacity="0.9"><path d="M0.8 1.5H6.2 M1.8 3H5.2 M0.8 4.5H6.2 M1.8 6H5.2"/></g></svg></div>
<div class="t" style="left:20px;top:164.7px;font-size:6.2px;letter-spacing:-0.22px;color:#1b1b1b">Formatters</div>
<svg style="position:absolute;left:121px;top:165.6px" width="4" height="4" viewBox="0 0 4 4"><path d="M0.5 1L2 2.5L3.5 1" stroke="#111111" fill="none" stroke-width="0.5"/></svg>
<div style="position:absolute;left:7.3px;top:181.4px"><svg width="6" height="6" viewBox="0 0 7 7"><g stroke="#111111" fill="none" stroke-width="0.8" opacity="0.9"><circle cx="3.5" cy="3.5" r="2.8"/><circle cx="3.5" cy="3.5" r="1.1"/></g></svg></div>
<div class="t" style="left:20px;top:181.5px;font-size:6.2px;letter-spacing:-0.22px;color:#1b1b1b">Generators</div>
<svg style="position:absolute;left:121px;top:182.4px" width="4" height="4" viewBox="0 0 4 4"><path d="M0.5 1L2 2.5L3.5 1" stroke="#111111" fill="none" stroke-width="0.5"/></svg>
<div style="position:absolute;left:7.3px;top:198.0px"><svg width="6" height="6" viewBox="0 0 7 7"><g stroke="#111111" fill="none" stroke-width="0.8" opacity="0.9"><path d="M0.6 5.5L2.3 1L4 5.5 M1.2 4H3.4 M4.2 6.3L6.3 4.2"/></g></svg></div>
<div class="t" style="left:20px;top:198.1px;font-size:6.2px;letter-spacing:-0.22px;color:#1b1b1b">Text</div>
<svg style="position:absolute;left:121px;top:199.0px" width="4" height="4" viewBox="0 0 4 4"><path d="M0.5 1L2 2.5L3.5 1" stroke="#111111" fill="none" stroke-width="0.5"/></svg>
<div style="position:absolute;left:7.3px;top:214.8px"><svg width="6" height="6" viewBox="0 0 7 7"><g stroke="#111111" fill="none" stroke-width="0.8" opacity="0.9"><path d="M0.8 0.8H6.2V6.2H0.8Z M0.8 5L2.8 3L4.5 4.7L5.3 4L6.2 4.9"/></g></svg></div>
<div class="t" style="left:20px;top:214.9px;font-size:6.2px;letter-spacing:-0.22px;color:#1b1b1b">Graphic</div>
<svg style="position:absolute;left:121px;top:215.8px" width="4" height="4" viewBox="0 0 4 4"><path d="M0.5 1L2 2.5L3.5 1" stroke="#111111" fill="none" stroke-width="0.5"/></svg>
<div style="position:absolute;left:7px;top:337.3px"><svg width="6" height="6" viewBox="0 0 7 7"><g stroke="#111111" fill="none" stroke-width="0.8" opacity="0.9"><circle cx="3.5" cy="3.5" r="1.2"/><path d="M3.5 0.6L6 2V5L3.5 6.4L1 5V2Z"/></g></svg></div>
<div class="t" style="left:20px;top:337.1px;font-size:6.2px;letter-spacing:-0.22px;color:#1b1b1b">Settings</div>
<div style="position:absolute;left:133.5px;top:20.5px;width:366.5px;height:329.5px;background:#f6f8fc;border-top-left-radius:3px;border-left:0.6px solid #e8ebf2;border-top:0.6px solid #e8ebf2">
<div class="t" style="left:23.3px;top:22.5px;font-size:9.5px;letter-spacing:0.3px;color:#1b1b1b">All tools</div>
<div style="position:absolute;left:363.5px;top:6px;width:0.8px;height:160px;background:#8a8b90"></div>
<div style="position:absolute;left:22.69999999999999px;top:38.4px;width:72.5px;height:132px;background:#fdfdfe;border-radius:3px;box-shadow:0 0 0 0.6px #e8eaf0">
<div style="position:absolute;left:16px;top:16px;width:42px;height:42px;background:#fbfbfd;border-radius:0;display:flex;align-items:center;justify-content:center"><svg width="26" height="26" viewBox="0 0 26 26" style="overflow:visible"><rect x="1.6" y="0.8" width="22.8" height="22.5" rx="2.6" stroke="#111111" fill="none" stroke-width="2.1" stroke-linecap="round" stroke-linejoin="round"/><circle cx="8.4" cy="14.3" r="2.55" stroke="#111111" fill="none" stroke-width="2" stroke-linecap="round" stroke-linejoin="round"/><path d="M10.80 7.80 C10.37 7.93 8.97 8.03 8.20 8.60 C7.43 9.17 6.58 10.27 6.20 11.20 C5.82 12.13 5.95 13.70 5.90 14.20" stroke="#111111" fill="none" stroke-width="2" stroke-linecap="round" stroke-linejoin="round"/><path d="M17.6 17.1V7.6L13 14.2H19.6" stroke="#111111" fill="none" stroke-width="2" stroke-linecap="round" stroke-linejoin="round"/></svg></div>
<div class="t" style="left:8px;top:76.7px;font-size:5.4px;font-weight:bold;color:#1b1b1b">Base 64</div>
<div class="t" style="left:8px;top:86.0px;font-size:4.75px;color:#5e5e62">Encode and decode</div>
<div class="t" style="left:8px;top:92.25px;font-size:4.75px;color:#5e5e62">Base64 data</div>
</div>
<div style="position:absolute;left:102.5px;top:38.4px;width:72.5px;height:132px;background:#fdfdfe;border-radius:3px;box-shadow:0 0 0 0.6px #e8eaf0">
<div style="position:absolute;left:16px;top:16px;width:42px;height:42px;background:#fbfbfd;border-radius:0;display:flex;align-items:center;justify-content:center"><svg width="26" height="26" viewBox="0 0 26 26" style="overflow:visible"><path d="M6.10 2.40 C7.28 2.12 10.82 0.50 13.20 0.70 C15.58 0.90 19.20 3.12 20.40 3.60" stroke="#111111" fill="none" stroke-width="1.75" stroke-linecap="round" stroke-linejoin="round"/><path d="M1.20 7.50 L3.90 4.30" stroke="#111111" fill="none" stroke-width="1.75" stroke-linecap="round" stroke-linejoin="round"/><path d="M2.30 18.90 C2.37 17.77 2.00 14.00 2.70 12.10 C3.40 10.20 4.95 8.63 6.50 7.50 C8.05 6.37 10.03 5.52 12.00 5.30 C13.97 5.08 16.47 5.35 18.30 6.20 C20.13 7.05 22.02 8.65 23.00 10.40 C23.98 12.15 24.00 15.65 24.20 16.70" stroke="#111111" fill="none" stroke-width="1.75" stroke-linecap="round" stroke-linejoin="round"/><path d="M6.50 22.20 C6.35 21.08 5.40 17.32 5.60 15.50 C5.80 13.68 6.57 12.37 7.70 11.30 C8.83 10.23 10.77 9.25 12.40 9.10 C14.03 8.95 16.23 9.62 17.50 10.40 C18.77 11.18 19.45 12.53 20.00 13.80 C20.55 15.07 20.45 16.88 20.80 18.00 C21.15 19.12 21.88 20.08 22.10 20.50" stroke="#111111" fill="none" stroke-width="1.75" stroke-linecap="round" stroke-linejoin="round"/><path d="M11.10 24.90 C10.82 23.90 9.53 20.68 9.40 18.90 C9.27 17.12 9.67 15.20 10.30 14.20 C10.93 13.20 12.28 12.83 13.20 12.90 C14.12 12.97 15.23 13.60 15.80 14.60 C16.37 15.60 16.03 17.55 16.60 18.90 C17.17 20.25 18.77 22.07 19.20 22.70" stroke="#111111" fill="none" stroke-width="1.75" stroke-linecap="round" stroke-linejoin="round"/><path d="M13.20 16.30 C13.35 17.15 13.70 20.03 14.10 21.40 C14.50 22.77 15.35 23.98 15.60 24.50" stroke="#111111" fill="none" stroke-width="1.75" stroke-linecap="round" stroke-linejoin="round"/></svg></div>
<div class="t" style="left:8px;top:76.7px;font-size:5.4px;font-weight:bold;color:#1b1b1b">Hash</div>
<div class="t" style="left:8px;top:86.0px;font-size:4.75px;color:#5e5e62">Calculate MD5, SHA1,</div>
<div class="t" style="left:8px;top:92.25px;font-size:4.75px;color:#5e5e62">SHA256 and SHA512</div>
<div class="t" style="left:8px;top:98.5px;font-size:4.75px;color:#5e5e62">hash from text data</div>
</div>
<div style="position:absolute;left:182.29999999999995px;top:38.4px;width:72.5px;height:132px;background:#fdfdfe;border-radius:3px;box-shadow:0 0 0 0.6px #e8eaf0">
<div style="position:absolute;left:16px;top:16px;width:42px;height:42px;background:#fbfbfd;border-radius:0;display:flex;align-items:center;justify-content:center"><svg width="26" height="26" viewBox="0 0 26 26" style="overflow:visible"><path d="M6.6 7L0.6 12.5L6.6 18M17.5 7L23.5 12.5L17.5 18M14.4 4.2L9.7 20.4" stroke="#111111" fill="none" stroke-width="1.7" stroke-linecap="round" stroke-linejoin="round"/></svg></div>
<div class="t" style="left:8px;top:76.7px;font-size:5.4px;font-weight:bold;color:#1b1b1b">HTML</div>
<div class="t" style="left:8px;top:86.0px;font-size:4.75px;color:#5e5e62">Escape or unescape all the</div>
<div class="t" style="left:8px;top:92.25px;font-size:4.75px;color:#5e5e62">applicable characters to</div>
<div class="t" style="left:8px;top:98.5px;font-size:4.75px;color:#5e5e62">their corresponding</div>
<div class="t" style="left:8px;top:104.75px;font-size:4.75px;color:#5e5e62">HTML entities</div>
</div>
<div style="position:absolute;left:262.1px;top:38.4px;width:72.5px;height:132px;background:#fdfdfe;border-radius:3px;box-shadow:0 0 0 0.6px #e8eaf0">
<div style="position:absolute;left:16px;top:16px;width:42px;height:42px;background:#fbfbfd;border-radius:0;display:flex;align-items:center;justify-content:center"><svg width="26" height="26" viewBox="0 0 26 26" style="overflow:visible"><path d="M3.6 6.8V3.3H20.4V6.8M12 3.3V22.4M8.6 22.4H15.6" stroke="#111111" fill="none" stroke-width="1.9"/></svg></div>
<div class="t" style="left:8px;top:76.7px;font-size:5.4px;font-weight:bold;color:#1b1b1b">Inspector &amp; Case</div>
<div class="t" style="left:8px;top:83.9px;font-size:5.4px;font-weight:bold;color:#1b1b1b">Converter</div>
<div class="t" style="left:8px;top:93.2px;font-size:4.75px;color:#5e5e62">Analyze text and convert</div>
<div class="t" style="left:8px;top:99.45px;font-size:4.75px;color:#5e5e62">it to a different case</div>
</div>
<div style="position:absolute;left:22.69999999999999px;top:183.9px;width:72.5px;height:132px;background:#fdfdfe;border-radius:3px;box-shadow:0 0 0 0.6px #e8eaf0">
<div style="position:absolute;left:16px;top:16px;width:42px;height:42px;background:#fbfbfd;border-radius:0;display:flex;align-items:center;justify-content:center"><svg width="26" height="26" viewBox="0 0 26 26" style="overflow:visible"><g transform="translate(0 0.8)"><path d="M5.50 2.40 C5.25 2.47 4.35 2.43 4.00 2.80 C3.65 3.17 3.50 3.57 3.40 4.60 C3.30 5.63 3.53 7.90 3.40 9.00 C3.27 10.10 3.13 10.73 2.60 11.20 C2.07 11.67 0.60 11.70 0.20 11.80 M0.20 11.80 C0.60 11.90 2.07 11.93 2.60 12.40 C3.13 12.87 3.27 13.50 3.40 14.60 C3.53 15.70 3.30 17.97 3.40 19.00 C3.50 20.03 3.65 20.40 4.00 20.80 C4.35 21.20 5.25 21.30 5.50 21.40" stroke="#111111" fill="none" stroke-width="1.8" stroke-linecap="round" stroke-linejoin="round"/><path transform="translate(0.9 0)" d="M19.20 2.40 C19.45 2.47 20.35 2.43 20.70 2.80 C21.05 3.17 21.20 3.57 21.30 4.60 C21.40 5.63 21.17 7.90 21.30 9.00 C21.43 10.10 21.57 10.73 22.10 11.20 C22.63 11.67 24.10 11.70 24.50 11.80 M24.50 11.80 C24.10 11.90 22.63 11.93 22.10 12.40 C21.57 12.87 21.43 13.50 21.30 14.60 C21.17 15.70 21.40 17.97 21.30 19.00 C21.20 20.03 21.05 20.40 20.70 20.80 C20.35 21.20 19.45 21.30 19.20 21.40" stroke="#111111" fill="none" stroke-width="1.8" stroke-linecap="round" stroke-linejoin="round"/><circle cx="12.4" cy="8.8" r="1.3" fill="#111111"/><path d="M12.7 16.6 Q12.9 19 11.3 20.6" stroke="#111111" fill="none" stroke-width="1.9" stroke-linecap="round" stroke-linejoin="round"/></g></svg></div>
<div class="t" style="left:8px;top:76.7px;font-size:5.4px;font-weight:bold;color:#1b1b1b">Json</div>
<div class="t" style="left:8px;top:86.0px;font-size:4.75px;color:#5e5e62">Indent or minify json</div>
<div class="t" style="left:8px;top:92.25px;font-size:4.75px;color:#5e5e62">data</div>
</div>
<div style="position:absolute;left:102.5px;top:183.9px;width:72.5px;height:132px;background:#fdfdfe;border-radius:3px;box-shadow:0 0 0 0.6px #e8eaf0">
<div style="position:absolute;left:16px;top:16px;width:42px;height:42px;background:#fbfbfd;border-radius:0;display:flex;align-items:center;justify-content:center"><svg width="26" height="26" viewBox="0 0 26 26" style="overflow:visible"><path transform="translate(0 1.2)" d="M2.2 2.3H19.7Q21.7 2.3 21.7 4.3V16.6M19 13.9L21.7 17.1L24.4 13.9M2.7 7.6V18Q2.7 20 4.7 20H22.5M0 10.5L2.7 7.3L5.4 10.5M8.6 8.2H16.6M8.6 11.7H16.6M8.6 15.4H13.6" stroke="#111111" fill="none" stroke-width="1.8" stroke-linecap="round" stroke-linejoin="round"/></svg></div>
<div class="t" style="left:8px;top:76.7px;font-size:5.4px;font-weight:bold;color:#1b1b1b">Json &lt;&gt; Yaml</div>
<div class="t" style="left:8px;top:86.0px;font-size:4.75px;color:#5e5e62">Convert Json data to</div>
<div class="t" style="left:8px;top:92.25px;font-size:4.75px;color:#5e5e62">Yaml and vice versa</div>
</div>
<div style="position:absolute;left:182.29999999999995px;top:183.9px;width:72.5px;height:132px;background:#fdfdfe;border-radius:3px;box-shadow:0 0 0 0.6px #e8eaf0">
<div style="position:absolute;left:16px;top:16px;width:42px;height:42px;background:#fbfbfd;border-radius:0;display:flex;align-items:center;justify-content:center"><svg width="26" height="26" viewBox="0 0 26 26" style="overflow:visible"><path d="M13.20 8.30 L13.95 0.30 L10.25 0.30 L11.00 8.30Z" fill="#111111"/><path d="M15.16 9.65 L20.47 3.62 L17.48 1.45 L13.38 8.36Z" fill="#111111"/><path d="M15.96 11.90 L23.80 10.14 L22.66 6.63 L15.28 9.81Z" fill="#111111"/><path d="M15.28 14.19 L22.66 17.37 L23.80 13.86 L15.96 12.10Z" fill="#111111"/><path d="M13.38 15.64 L17.48 22.55 L20.47 20.38 L15.16 14.35Z" fill="#111111"/><path d="M11.00 15.70 L10.25 23.70 L13.95 23.70 L13.20 15.70Z" fill="#111111"/><path d="M9.04 14.35 L3.73 20.38 L6.72 22.55 L10.82 15.64Z" fill="#111111"/><path d="M8.24 12.10 L0.40 13.86 L1.54 17.37 L8.92 14.19Z" fill="#111111"/><path d="M8.92 9.81 L1.54 6.63 L0.40 10.14 L8.24 11.90Z" fill="#111111"/><path d="M10.82 8.36 L6.72 1.45 L3.73 3.62 L9.04 9.65Z" fill="#111111"/></svg></div>
<div class="t" style="left:8px;top:76.7px;font-size:5.4px;font-weight:bold;color:#1b1b1b">JWT Decoder</div>
<div class="t" style="left:8px;top:86.0px;font-size:4.75px;color:#5e5e62">Decode a JWT header,</div>
<div class="t" style="left:8px;top:92.25px;font-size:4.75px;color:#5e5e62">payload and signature</div>
</div>
<div style="position:absolute;left:262.1px;top:183.9px;width:72.5px;height:132px;background:#fdfdfe;border-radius:3px;box-shadow:0 0 0 0.6px #e8eaf0">
<div style="position:absolute;left:16px;top:16px;width:42px;height:42px;background:#fbfbfd;border-radius:0;display:flex;align-items:center;justify-content:center"><svg width="26" height="26" viewBox="0 0 26 26" style="overflow:visible"><rect x="1.1" y="6.1" width="22.8" height="13.5" rx="2.4" stroke="#111111" fill="none" stroke-width="1.7" stroke-linecap="round" stroke-linejoin="round"/><path d="M4.4 16.4V9.5L8.1 13.4L11.8 9.5V16.4" stroke="#111111" fill="none" stroke-width="2.4" stroke-linejoin="miter"/><path d="M18.3 9.2V14.5" stroke="#111111" fill="none" stroke-width="2.2" stroke-linecap="round" stroke-linejoin="round"/><path d="M15.3 13.2H21.3L18.3 16.6Z" fill="#111111" stroke="#111111" stroke-width="0.8" stroke-linejoin="round"/></svg></div>
<div class="t" style="left:8px;top:76.7px;font-size:5.4px;font-weight:bold;color:#1b1b1b">Markdown Preview</div>
<div class="t" style="left:8px;top:86.0px;font-size:4.75px;color:#5e5e62">Preview a Markdown</div>
<div class="t" style="left:8px;top:92.25px;font-size:4.75px;color:#5e5e62">document with a</div>
<div class="t" style="left:8px;top:98.5px;font-size:4.75px;color:#5e5e62">GitHub-like render</div>
</div>
</div>
</div>
<div style="position:absolute;left:0;top:429.5px;width:800px;height:20.5px;background:linear-gradient(90deg,#dfe6f3 50%,#dfe6f3 75%,#e6edf5 90%)">
<svg style="position:absolute;left:321.5px;top:5.5px" width="10" height="10" viewBox="0 0 10 10"><rect x="0" y="0" width="4.7" height="4.7" fill="#46b4ea"/><rect x="5.3" y="0" width="4.7" height="4.7" fill="#46b4ea"/><rect x="0" y="5.3" width="4.7" height="4.7" fill="#3aa8e4"/><rect x="5.3" y="5.3" width="4.7" height="4.7" fill="#3aa8e4"/></svg>
<svg style="position:absolute;left:340.5px;top:5.5px" width="10" height="10" viewBox="0 0 10 10"><circle cx="5.8" cy="4.2" r="3.2" stroke="#1b1b1b" fill="none" stroke-width="1.2"/><path d="M3.5 6.5L1 9" stroke="#1b1b1b" stroke-width="1.3"/></svg>
<svg style="position:absolute;left:359px;top:6px" width="10" height="9" viewBox="0 0 10 9"><rect x="0" y="3" width="6" height="6" fill="#8d8f94"/><rect x="3" y="0" width="7" height="6" fill="#e8e8ea"/></svg>
<svg style="position:absolute;left:377px;top:5.5px" width="10" height="10" viewBox="0 0 10 10"><rect x="0" y="0" width="4.5" height="10" rx="0.8" fill="#e6eef6"/><rect x="5.5" y="0" width="4.5" height="10" rx="0.8" fill="#47a5e4"/></svg>
<svg style="position:absolute;left:395.5px;top:5.5px" width="10" height="10" viewBox="0 0 10 10"><circle cx="5" cy="5" r="5" fill="#7b6bd6"/><rect x="2.5" y="3" width="5.5" height="4" rx="1" fill="#fff"/></svg>
<svg style="position:absolute;left:414px;top:5.5px" width="11" height="10" viewBox="0 0 11 10"><path d="M0 1.5Q0 0.5 1 0.5H4L5 1.8H10Q11 1.8 11 2.8V9.5H0Z" fill="#e8a726"/><rect x="0" y="3.2" width="11" height="6.6" rx="0.8" fill="#f9cf4a"/></svg>
<svg style="position:absolute;left:432.5px;top:5.5px" width="10" height="10" viewBox="0 0 10 10"><circle cx="5" cy="5" r="5" fill="#2aa0e0"/><circle cx="6" cy="6" r="2.8" fill="#e2e9f1"/><path d="M1 6 Q2 1 6 1.5 Q9 2.5 9 5" fill="none" stroke="#58c86a" stroke-width="1.2"/></svg>
<svg style="position:absolute;left:450.5px;top:5px" width="10" height="11" viewBox="0 0 10 11"><rect x="0" y="2.5" width="10" height="8.5" rx="1" fill="#2d6fb3"/><path d="M3 3V1.5Q5 0 7 1.5V3" stroke="#2d6fb3" fill="none" stroke-width="0.8"/><rect x="3" y="5" width="2" height="2" fill="#f35325"/><rect x="5.2" y="5" width="2" height="2" fill="#81bc06"/><rect x="3" y="7.2" width="2" height="2" fill="#05a6f0"/><rect x="5.2" y="7.2" width="2" height="2" fill="#ffba08"/></svg>
<div style="position:absolute;left:466.5px;top:1.5px;width:15.5px;height:17px;background:rgba(255,255,255,0.55);border-radius:2px"></div>
<div style="position:absolute;left:469px;top:6px;width:11px;height:8px;background:#7b3fd0;border-radius:1px;color:#fff;font-size:5px;line-height:8px;text-align:center;font-family:Liberation Mono">&lt;/&gt;</div>
<div style="position:absolute;left:471.5px;top:17.2px;width:5px;height:1.2px;background:#3a7bd5;border-radius:1px"></div>
<svg style="position:absolute;left:729px;top:7px" width="5" height="4" viewBox="0 0 5 4"><path d="M0.5 3L2.5 1L4.5 3" stroke="#1b1b1b" fill="none" stroke-width="0.7"/></svg>
<svg style="position:absolute;left:738px;top:7px" width="7" height="6" viewBox="0 0 7 6"><path d="M0.5 5.5V3.5Q3.5 0 6.5 3.5V5.5" stroke="#1b1b1b" fill="none" stroke-width="0.9"/><rect x="2.5" y="3.5" width="2" height="2" fill="#1b1b1b"/></svg>
<svg style="position:absolute;left:749px;top:7px" width="7" height="6" viewBox="0 0 7 6"><path d="M2 0.4H0.4V5.6H2M5 0.4H6.6V5.6H5" stroke="#1b1b1b" fill="none" stroke-width="0.7"/></svg>
<svg style="position:absolute;left:759px;top:7.5px" width="7" height="6" viewBox="0 0 7 6"><path d="M0.5 2H2L3.8 0.5V5.5L2 4H0.5Z" fill="#1b1b1b"/><path d="M4.8 1.6Q5.8 3 4.8 4.4" stroke="#1b1b1b" fill="none" stroke-width="0.6"/></svg>
<div class="t" style="left:773px;top:6px;font-size:4.5px;color:#1b1b1b;text-align:right;width:21px">17:10 PM</div>
<div class="t" style="left:771px;top:12.8px;font-size:4.5px;color:#1b1b1b;text-align:right;width:23px">5/18/2022</div>
</div>
</div>
</body></html>
